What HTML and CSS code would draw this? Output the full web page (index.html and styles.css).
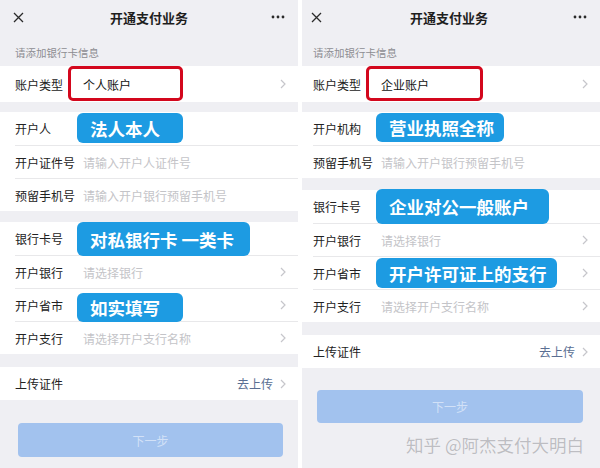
FILE: index.html
```html
<!DOCTYPE html>
<html lang="zh-CN">
<head>
  <meta charset="UTF-8" />
  <meta name="viewport" content="width=device-width, initial-scale=1.0" />
  <title>开通支付业务</title>
  <link rel="stylesheet" href="styles.css">
</head>
<body>

  <!-- 个人账户 -->
  <div class="phone phone-left">
    <div class="topbar">
      <svg class="icon-close" width="11" height="11" viewBox="0 0 11 11"><path d="M1 1L10 10M10 1L1 10" /></svg>
      <div class="title">开通支付业务</div>
      <svg class="icon-more" width="14" height="4" viewBox="0 0 14 4"><circle cx="2" cy="2" r="1.4" /><circle cx="7" cy="2" r="1.4" /><circle cx="12" cy="2" r="1.4" /></svg>
    </div>
    <div class="tip">请添加银行卡信息</div>

    <div class="group">
      <div class="row row-type">
        <span class="label">账户类型</span>
        <span class="value">个人账户</span>
        <svg class="arrow" width="6" height="10" viewBox="0 0 6 10"><path d="M1 1L5 5L1 9" /></svg>
        <div class="mark"></div>
      </div>
    </div>

    <div class="group gap-s">
      <div class="row">
        <span class="label">开户人</span>
        <div class="tag tag-legal">法人本人</div>
      </div>
      <div class="row">
        <span class="label">开户证件号</span>
        <span class="placeholder">请输入开户人证件号</span>
      </div>
      <div class="row">
        <span class="label">预留手机号</span>
        <span class="placeholder">请输入开户银行预留手机号</span>
      </div>
    </div>

    <div class="group gap-m">
      <div class="row">
        <span class="label">银行卡号</span>
        <div class="tag tag-card">对私银行卡 一类卡</div>
      </div>
      <div class="row">
        <span class="label">开户银行</span>
        <span class="placeholder">请选择银行</span>
        <svg class="arrow" width="6" height="10" viewBox="0 0 6 10"><path d="M1 1L5 5L1 9" /></svg>
      </div>
      <div class="row">
        <span class="label">开户省市</span>
        <span class="placeholder"></span>
        <svg class="arrow" width="6" height="10" viewBox="0 0 6 10"><path d="M1 1L5 5L1 9" /></svg>
        <div class="tag tag-real">如实填写</div>
      </div>
      <div class="row">
        <span class="label">开户支行</span>
        <span class="placeholder">请选择开户支行名称</span>
        <svg class="arrow" width="6" height="10" viewBox="0 0 6 10"><path d="M1 1L5 5L1 9" /></svg>
      </div>
    </div>

    <div class="group gap-l">
      <div class="row">
        <span class="label">上传证件</span>
        <span class="link">去上传</span>
        <svg class="arrow" width="6" height="10" viewBox="0 0 6 10"><path d="M1 1L5 5L1 9" /></svg>
      </div>
    </div>

    <button class="next">下一步</button>
  </div>

  <!-- 企业账户 -->
  <div class="phone phone-right">
    <div class="topbar">
      <svg class="icon-close" width="11" height="11" viewBox="0 0 11 11"><path d="M1 1L10 10M10 1L1 10" /></svg>
      <div class="title">开通支付业务</div>
      <svg class="icon-more" width="14" height="4" viewBox="0 0 14 4"><circle cx="2" cy="2" r="1.4" /><circle cx="7" cy="2" r="1.4" /><circle cx="12" cy="2" r="1.4" /></svg>
    </div>
    <div class="tip">请添加银行卡信息</div>

    <div class="group">
      <div class="row row-type">
        <span class="label">账户类型</span>
        <span class="value">企业账户</span>
        <svg class="arrow" width="6" height="10" viewBox="0 0 6 10"><path d="M1 1L5 5L1 9" /></svg>
        <div class="mark mark-wide"></div>
      </div>
    </div>

    <div class="group gap-s">
      <div class="row">
        <span class="label">开户机构</span>
        <div class="tag tag-license">营业执照全称</div>
      </div>
      <div class="row">
        <span class="label">预留手机号</span>
        <span class="placeholder">请输入开户银行预留手机号</span>
      </div>
    </div>

    <div class="group gap-m">
      <div class="row">
        <span class="label">银行卡号</span>
        <div class="tag tag-corp">企业对公一般账户</div>
      </div>
      <div class="row">
        <span class="label">开户银行</span>
        <span class="placeholder">请选择银行</span>
        <svg class="arrow" width="6" height="10" viewBox="0 0 6 10"><path d="M1 1L5 5L1 9" /></svg>
      </div>
      <div class="row">
        <span class="label">开户省市</span>
        <span class="placeholder"></span>
        <svg class="arrow" width="6" height="10" viewBox="0 0 6 10"><path d="M1 1L5 5L1 9" /></svg>
        <div class="tag tag-branch">开户许可证上的支行</div>
      </div>
      <div class="row">
        <span class="label">开户支行</span>
        <span class="placeholder">请选择开户支行名称</span>
        <svg class="arrow" width="6" height="10" viewBox="0 0 6 10"><path d="M1 1L5 5L1 9" /></svg>
      </div>
    </div>

    <div class="group gap-l">
      <div class="row">
        <span class="label">上传证件</span>
        <span class="link">去上传</span>
        <svg class="arrow" width="6" height="10" viewBox="0 0 6 10"><path d="M1 1L5 5L1 9" /></svg>
      </div>
    </div>

    <button class="next">下一步</button>
    <div class="watermark">知乎 @阿杰支付大明白</div>
  </div>

</body>
</html>
```

FILE: styles.css
```css
* {
  margin: 0;
  padding: 0;
  box-sizing: border-box;
}

body {
  font-family: "Noto Sans CJK SC", "Noto Sans", sans-serif;
  background-color: #fff;
  display: flex;
  gap: 4px;
  width: 600px;
  height: 468px;
  overflow: hidden;
}

.phone {
  --pad: 15px;
  width: 298px;
  height: 468px;
  background-color: #efeff3;
  display: flex;
  flex-direction: column;
  overflow: hidden;
}

.phone-right {
  --pad: 11px;
}

/* Top bar */
.topbar {
  height: 34px;
  display: grid;
  grid-template-columns: 1fr auto 1fr;
  align-items: center;
  padding: 0 13px 0 calc(var(--pad) - 2px);
}

.topbar .title {
  font-size: 13px;
  font-weight: 600;
  color: #1e1e1e;
}

.icon-close path {
  stroke: #2a2a2a;
  stroke-width: 1.3;
  fill: none;
}

.icon-more {
  justify-self: end;
}

.icon-more circle {
  fill: #2a2a2a;
}

.tip {
  height: 32px;
  display: flex;
  align-items: flex-end;
  padding: 0 0 7px var(--pad);
  font-size: 10.5px;
  line-height: 13px;
  color: #8d8d92;
}

/* Form groups */
.group {
  background-color: #fff;
  padding-left: var(--pad);
}

.gap-s {
  margin-top: 10px;
}

.gap-m {
  margin-top: 11px;
}

.phone-right .gap-m {
  margin-top: 12px;
}

.gap-l {
  margin-top: 13px;
}

.row {
  position: relative;
  height: 33px;
  display: flex;
  align-items: center;
  padding-right: 12px;
  font-size: 12px;
}

.row + .row {
  border-top: 1px solid #e8e8ea;
}

.row-type {
  height: 36px;
}

.row .label {
  flex: 0 0 68px;
  color: #222;
}

.row .value {
  flex: 1;
  color: #111;
}

.row .placeholder {
  flex: 1;
  color: #c4c4c8;
}

.row .link {
  flex: 1;
  text-align: right;
  color: #5a6e92;
  margin-right: 7px;
}

.arrow {
  flex: 0 0 6px;
}

.arrow path {
  stroke: #c6c6cb;
  stroke-width: 1.2;
  fill: none;
}

/* Red highlight frame */
.mark {
  position: absolute;
  left: 53px;
  top: 0;
  width: 115px;
  height: 35px;
  border: 3px solid #d3071d;
  border-radius: 5px;
}

.mark-wide {
  width: 117px;
}

/* Blue callouts */
.tag {
  position: absolute;
  left: 62px;
  z-index: 2;
  display: flex;
  align-items: center;
  padding-left: 13px;
  background-color: #1d9be2;
  color: #fff;
  border-radius: 6px;
  font-size: 17.5px;
  font-weight: 700;
  white-space: nowrap;
}

.tag-legal {
  top: 1px;
  width: 106px;
  height: 30px;
}

.tag-card {
  top: 0;
  width: 173px;
  height: 34px;
}

.tag-real {
  top: 4px;
  width: 106px;
  height: 29px;
}

.phone-right .tag {
  left: 63px;
}

.tag-license {
  top: 1px;
  width: 128px;
  height: 29px;
}

.tag-corp {
  top: -1px;
  width: 173px;
  height: 35px;
}

.tag-branch {
  top: 1px;
  width: 181px;
  height: 30px;
}

/* Bottom button */
.next {
  margin: 23px 15px 0 18px;
  height: 34px;
  border: none;
  border-radius: 4px;
  background-color: #a2c2ee;
  color: #d2e1f7;
  font-family: inherit;
  font-size: 12px;
}

.phone-right .next {
  margin: 22px 17px 0 15px;
  height: 33px;
}

.watermark {
  margin: 10px 16px 0 0;
  text-align: right;
  font-size: 17.5px;
  line-height: 24px;
  color: #bdbdc2;
  text-shadow: 0 0 1px #fff;
}
```
